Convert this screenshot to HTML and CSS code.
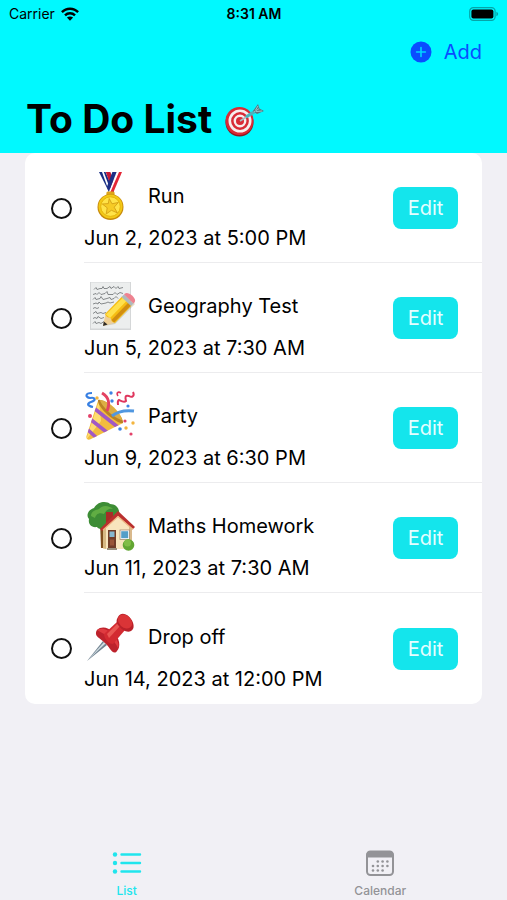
FILE: index.html
```html
<!DOCTYPE html>
<html lang="en">

<head>
    <meta charset="UTF-8">
    <meta name="viewport" content="width=device-width, initial-scale=1.0">
    <title>To Do List</title>
    <link rel="stylesheet" href="styles.css">
</head>

<body>
    <header class="header">
        <div class="status-bar">
            <div class="carrier">
                <span>Carrier</span>
                <svg width="18" height="14" viewBox="0 0 18 14" aria-hidden="true">
                    <g fill="none" stroke="#000" stroke-width="2.4">
                        <path d="M0.9 5.2C5.4 .5 12.6 .5 17.1 5.2" />
                        <path d="M4 8.4c2.8-2.8 7.2-2.8 10 0" />
                    </g>
                    <path d="M5.9 10.6c1.8-1.6 4.4-1.6 6.2 0L9 13.8z" />
                </svg>
            </div>
            <span class="time">8:31 AM</span>
            <div class="battery">
                <svg width="30" height="14" viewBox="0 0 30 14" aria-hidden="true">
                    <rect x="0.7" y="0.7" width="25.4" height="12.6" rx="3.6" fill="none" stroke="#05a5a9" stroke-width="1.2" />
                    <rect x="2.4" y="2.4" width="22" height="9.2" rx="2" />
                    <path d="M27.4 4.8c2.3.9 2.3 3.5 0 4.4z" fill="#05a5a9" />
                </svg>
            </div>
        </div>

        <div class="toolbar">
            <button class="add-button" type="button">
                <svg width="22" height="22" viewBox="0 0 22 22" aria-hidden="true">
                    <circle cx="11" cy="11" r="10.5" fill="#0a4dff" />
                    <path d="M11 6.6v8.8M6.6 11h8.8" stroke="#00d6ff" stroke-width="1.6" stroke-linecap="round" />
                </svg>
                <span>Add</span>
            </button>
        </div>

        <h1 class="title">
            <span>To Do List</span>
            <svg width="42" height="36" viewBox="0 0 42 36" aria-hidden="true">
                <ellipse cx="15.5" cy="21.5" rx="14" ry="14" fill="#8d1720" />
                <circle cx="15.5" cy="20" r="14" fill="#d92a35" />
                <circle cx="16" cy="20" r="10.2" fill="none" stroke="#f6eeee" stroke-width="2.6" />
                <circle cx="16" cy="20" r="5.2" fill="none" stroke="#f6eeee" stroke-width="2.4" />
                <path d="M16 20 31 10.500" stroke="#a9bcc4" stroke-width="1.6" />
                <path d="M22 16 34 8.500" stroke="#4bb3bd" stroke-width="3.2" />
                <path d="m29 10 5-7 1.500 4.600L40 10l-7 3z" fill="#5a7781" />
                <path d="m30 11 5-3.400M32 10.600l6-.6M31.600 9l2.400-4" stroke="#a8d7dc" stroke-width="0.8" />
            </svg>
        </h1>
    </header>

    <main class="content">
        <ul class="task-list">
            <li class="task">
                <input class="task-check" type="checkbox" id="task-1">
                <div class="task-body">
                    <label class="task-info" for="task-1">
                        <span class="task-name">
                            <svg class="task-icon" viewBox="0 0 52 52" aria-hidden="true">
                                <path d="M15 2h6.5L30 22h-5z" fill="#162d83" />
                                <path d="M18 2h1.8l7.4 20h-2z" fill="#fff" />
                                <path d="M21.8 2h4.6l4.4 12-3 5z" fill="#c71935" />
                                <path d="M38 2h-4.6L25 22h4.5z" fill="#e32636" />
                                <path d="M35 2h-2.4L24.6 22h1.8z" fill="#fff" />
                                <path d="M32.6 2h-4.2l-5.6 15 2 5z" fill="#1d2f86" />
                                <rect x="22.4" y="21.5" width="8.2" height="5" rx="1.5" fill="#dda51c" />
                                <circle cx="26.5" cy="37" r="13" fill="#c78a0c" />
                                <circle cx="26.5" cy="36.6" r="12" fill="#f3c916" />
                                <circle cx="26.5" cy="36.6" r="9.8" fill="#ffe348" stroke="#e6b40c" />
                                <path d="m25.2 28.5 2.8 5.3 6.4-1.4-4.2 4.8 3.2 5.7-6-2.6-5.2 3.7 1-6.2-4.9-3.8 6-.4z" fill="#f6cb25" stroke="#cf9a12" stroke-width="0.8" stroke-linejoin="round" />
                            </svg>
                            <span>Run</span>
                        </span>
                        <span class="task-date">Jun 2, 2023 at 5:00 PM</span>
                    </label>
                    <button class="edit-button" type="button">Edit</button>
                </div>
            </li>

            <li class="task">
                <input class="task-check" type="checkbox" id="task-2">
                <div class="task-body">
                    <label class="task-info" for="task-2">
                        <span class="task-name">
                            <svg class="task-icon" viewBox="0 0 52 52" aria-hidden="true">
                                <rect x="6" y="2" width="41" height="48" fill="#d5d7d8" />
                                <rect x="7" y="2.5" width="39" height="46" fill="#eceeee" />
                                <g fill="none" stroke="#6b6e71" stroke-width="0.8">
                                    <path d="M10 9.500l2-2 1 2 3-1h2l1-2 1 2h3l3-2 1 2 3-2 2 2 2-2 1 2 4-1" />
                                    <path d="M9 14.500l3-1 1 1 2-2 2 2 4-1 2-2 1 3h5l2-2 2 2 3-2 3 1" />
                                    <path d="M9 19.500l2-2 1 2 4-1 1-2 2 3 4-1 3-1 1 2 3-1 2-2 2 2" />
                                    <path d="M9 24l3-1 2 1 1-2 2 2 5-1 2-1 2 1 4-1" />
                                    <path d="M9 28.500l2-1 2 1 2-1" />
                                    <path d="M9 33.500l3-2 1 2 4-1 2 1 3-1" />
                                    <path d="M9 38.500l2-1 2 1 1-2 3 2 3-1" />
                                    <path d="M9 43.500l2-2 1 2 3-1 2 1 3-2" />
                                </g>
                                <path d="m20 46 3-12 19-18 9 8-20 20z" fill="#8c6f20" opacity=".25" />
                                <path d="m19 46 2.500-12.500 9.500 9z" fill="#efcf96" />
                                <path d="m19 46 .8-4.600 3.800 3.200z" fill="#302c28" />
                                <path d="m21 34 17-17.500 9.500 9L31 43l-3-1.500-1.500-3.500-3.500-1z" fill="#f6bd13" />
                                <path d="m22 34.500 17-17 3.500 3.500-16.500 17z" fill="#ffe04b" />
                                <path d="m30 42.500 17-17-2.800-2.800L27.500 40z" fill="#d18d11" />
                                <path d="m37.500 17 2.500-2.500 9.500 9-2.500 2.500z" fill="#aeb9bd" />
                                <path d="m40 14.500 1-1c3-2.500 12.500 4.500 9.500 9l-1 1z" fill="#ee8290" />
                            </svg>
                            <span>Geography Test</span>
                        </span>
                        <span class="task-date">Jun 5, 2023 at 7:30 AM</span>
                    </label>
                    <button class="edit-button" type="button">Edit</button>
                </div>
            </li>

            <li class="task">
                <input class="task-check" type="checkbox" id="task-3">
                <div class="task-body">
                    <label class="task-info" for="task-3">
                        <span class="task-name">
                            <svg class="task-icon" viewBox="0 0 52 52" aria-hidden="true">
                                <defs>
                                    <clipPath id="cone">
                                        <path d="M14 11 2.500 46c-.7 3 1.500 4.500 4 3.300L39 33C39 25 25 8 14 11z" />
                                    </clipPath>
                                </defs>
                                <g clip-path="url(#cone)">
                                    <path d="M0 8h42v44H0z" fill="#f2bd3d" />
                                    <path d="M15 11 2 50l15-19z" fill="#ffdc70" />
                                    <path d="m11 19 24 19M6 29l19 15M3 39l13 12" fill="none" stroke="#a159c5" stroke-width="3.600" />
                                </g>
                                <path d="M14 10c5-3 26 16 25 23-5 2-26-15-25-23z" fill="#ba8224" />
                                <path d="M16 10c6-1 22 14 22 20-7-1-21-14-22-20z" fill="#dcad43" />
                                <path d="M23 21c3-7 2-14-5-18" fill="none" stroke="#e44262" stroke-width="3" />
                                <path d="M28 26c6-5 13-6 22-5" fill="none" stroke="#5097e0" stroke-width="3" />
                                <path d="M8 3c-7 0-7 4-2 5 5-1 7 2 1 4-5 2-3 4 2 5" fill="none" stroke="#377fe2" stroke-width="2.200" />
                                <path d="M49 2c2 4-1 6-4 4-4-1-4 1-3 5-2 2-5 0-7-1-2 1-1 3-1 5" fill="none" stroke="#df365d" stroke-width="2" />
                                <path d="M37 3c-3-2-5 0-3 3" fill="none" stroke="#df365d" stroke-width="1.600" />
                                <g fill="#3d82e5">
                                    <circle cx="27" cy="3" r="1.700" />
                                    <circle cx="28" cy="11" r="1.700" />
                                    <circle cx="44" cy="16" r="1.600" />
                                    <circle cx="36" cy="39" r="1.800" />
                                </g>
                                <g fill="#e4426a">
                                    <circle cx="6" cy="26" r="2" />
                                    <circle cx="41" cy="31" r="1.600" />
                                    <circle cx="47" cy="44" r="1.600" />
                                </g>
                                <g fill="#f3b53f">
                                    <circle cx="13" cy="8" r="1.700" />
                                    <circle cx="42" cy="38" r="1.700" />
                                    <circle cx="49" cy="33" r="1.700" />
                                </g>
                            </svg>
                            <span>Party</span>
                        </span>
                        <span class="task-date">Jun 9, 2023 at 6:30 PM</span>
                    </label>
                    <button class="edit-button" type="button">Edit</button>
                </div>
            </li>

            <li class="task">
                <input class="task-check" type="checkbox" id="task-4">
                <div class="task-body">
                    <label class="task-info" for="task-4">
                        <span class="task-name">
                            <svg class="task-icon" viewBox="0 0 52 52" aria-hidden="true">
                                <path d="M16 20h5v28h-4z" fill="#80501f" />
                                <path d="M5 19C1 14 6 9 10 8 14 1 23 1 26 4c7 0 10 6 9 10 2 7-5 12-10 12-4 4-10 4-12 1-6 1-9-3-8-8z" fill="#3d8d35" />
                                <path d="M7 16c0-5 5-6 8-7 4-5 11-3 14 0-5-1-7 2-9 5-6-2-8 1-9 4z" fill="#60ad43" />
                                <path d="m19 28 16-14 13 12v23H19z" fill="#f8e5bd" />
                                <path d="M19 28h3v21l-3-1z" fill="#d7b984" />
                                <path d="M45 26h3v22l-3 1z" fill="#d9b98d" />
                                <path d="M22 12h7v8l-7 6z" fill="#a92c27" />
                                <path d="m16 29 18-18 17 16-2 2-15-13-16 15z" fill="#ba302e" />
                                <path d="m19 30 15-13.500 15 13" fill="none" stroke="#eeb07d" stroke-width="1.200" />
                                <rect x="24" y="30" width="8" height="18" fill="#713d28" />
                                <rect x="25.500" y="31.500" width="5" height="5.500" fill="#86b8cf" />
                                <rect x="26" y="39.500" width="4" height="6" fill="#985538" />
                                <rect x="36" y="30" width="9.500" height="9.500" fill="#fff" stroke="#a58a72" stroke-width="0.800" />
                                <rect x="37.200" y="31.200" width="7" height="7" fill="#549ec9" />
                                <path d="M23 48h10v2H23z" fill="#998f7c" />
                                <circle cx="44.500" cy="45" r="5.800" fill="#62a633" />
                                <circle cx="43.500" cy="43" r="3.500" fill="#81bd46" />
                            </svg>
                            <span>Maths Homework</span>
                        </span>
                        <span class="task-date">Jun 11, 2023 at 7:30 AM</span>
                    </label>
                    <button class="edit-button" type="button">Edit</button>
                </div>
            </li>

            <li class="task">
                <input class="task-check" type="checkbox" id="task-5">
                <div class="task-body">
                    <label class="task-info" for="task-5">
                        <span class="task-name">
                            <svg class="task-icon" viewBox="0 0 52 52" aria-hidden="true">
                                <path d="m3 50 16-20 4 4z" fill="#718391" />
                                <path d="m4 49 16-18 1.500 1.500z" fill="#d0dce1" />
                                <path d="M13 19c4-4 11-3 16 2 7 6 8 15 4 19-2 3-5 1-7-2-3-5-6-7-11-11-3-2-4-5-2-8z" fill="#bd222c" />
                                <path d="M13 19c5-3 12 0 16 5 4 4 7 10 5 13-3-8-12-13-21-18z" fill="#e03b40" />
                                <path d="m20 23 13-12 8 8-12 14c-4 0-9-5-9-10z" fill="#d32a31" />
                                <path d="m23 23 11-11 2.500 2.500L25 27z" fill="#e95753" />
                                <path d="M34 6c3-6 10-3 13 2 3 4 4 10 0 12-4 2-9-1-12-5-3-3-3-6-1-9z" fill="#b9212a" />
                                <ellipse cx="41" cy="10.500" rx="8" ry="6" transform="rotate(42 41 10.500)" fill="#da3437" />
                            </svg>
                            <span>Drop off</span>
                        </span>
                        <span class="task-date">Jun 14, 2023 at 12:00 PM</span>
                    </label>
                    <button class="edit-button" type="button">Edit</button>
                </div>
            </li>
        </ul>
    </main>

    <nav class="tab-bar">
        <a class="tab active" href="#list">
            <svg width="30" height="28" viewBox="0 0 30 28" aria-hidden="true">
                <g fill="#20e5ed">
                    <circle cx="3" cy="5.500" r="2.200" />
                    <circle cx="3" cy="14" r="2.200" />
                    <circle cx="3" cy="22.500" r="2.200" />
                </g>
                <path d="M9.500 5.500H28M9.500 14H28M9.500 22.500H28" stroke="#20e5ed" stroke-width="2.400" stroke-linecap="round" />
            </svg>
            <span>List</span>
        </a>
        <a class="tab" href="#calendar">
            <svg width="30" height="28" viewBox="0 0 30 28" aria-hidden="true">
                <rect x="2" y="2.500" width="26" height="23.500" rx="3.500" fill="none" stroke="#939397" stroke-width="2" />
                <path d="M1.500 8.500V5.500c0-2 1.500-3.500 3.500-3.500h20c2 0 3.500 1.500 3.500 3.500v3z" fill="#939397" />
                <g fill="#939397">
                    <circle cx="12.800" cy="12.500" r="1.300" />
                    <circle cx="17.600" cy="12.500" r="1.300" />
                    <circle cx="22.400" cy="12.500" r="1.300" />
                    <circle cx="8" cy="17" r="1.300" />
                    <circle cx="12.800" cy="17" r="1.300" />
                    <circle cx="17.600" cy="17" r="1.300" />
                    <circle cx="22.400" cy="17" r="1.300" />
                    <circle cx="8" cy="21.500" r="1.300" />
                    <circle cx="12.800" cy="21.500" r="1.300" />
                    <circle cx="17.600" cy="21.500" r="1.300" />
                </g>
            </svg>
            <span>Calendar</span>
        </a>
    </nav>
</body>

</html>
```

FILE: styles.css
```css
* {
    margin: 0;
    padding: 0;
    box-sizing: border-box;
}

body {
    font-family: 'Inter', 'Liberation Sans', sans-serif;
    display: flex;
    flex-direction: column;
    min-height: 100vh;
    background-color: #f1f0f5;
    color: #000;
}

button {
    font-family: inherit;
    border: none;
    cursor: pointer;
}

svg {
    display: block;
    flex-shrink: 0;
}

/* header */
.header {
    background-color: #00f9ff;
    padding-bottom: 8px;
}

.status-bar {
    display: grid;
    grid-template-columns: 1fr auto 1fr;
    align-items: center;
    height: 27px;
    padding: 0 8px 0 9px;
    font-size: 14px;
}

.carrier {
    display: flex;
    align-items: center;
    gap: 6px;
}

.time {
    font-weight: 600;
}

.battery {
    display: flex;
    justify-content: flex-end;
}

.toolbar {
    display: flex;
    justify-content: flex-end;
    padding: 8px 25px 0;
}

.add-button {
    display: flex;
    align-items: center;
    gap: 12px;
    height: 34px;
    background: none;
    color: #0a4dff;
    font-size: 20px;
}

.title {
    display: flex;
    align-items: center;
    gap: 12px;
    padding: 24px 26px 0;
    font-size: 39px;
    font-weight: 700;
    line-height: 52px;
}

/* tasks */
.content {
    flex: 1;
    padding: 0 25px;
}

.task-list {
    list-style: none;
    background-color: #fff;
    border-radius: 10px;
}

.task {
    display: flex;
    align-items: center;
    gap: 12px;
    padding-left: 26px;
}

.task-check {
    appearance: none;
    width: 21px;
    height: 21px;
    border: 2px solid #111;
    border-radius: 50%;
    cursor: pointer;
}

.task-check:checked {
    background-color: #14e5ec;
}

.task-body {
    flex: 1;
    display: flex;
    align-items: center;
    justify-content: space-between;
    height: 110px;
    padding-right: 24px;
    border-bottom: 1px solid #ececee;
}

.task:last-child .task-body {
    height: 111px;
    border-bottom: none;
}

.task-info {
    display: flex;
    flex-direction: column;
    gap: 3px;
    padding-top: 5px;
    font-size: 20px;
    line-height: 26px;
}

.task-name {
    display: flex;
    align-items: center;
    gap: 12px;
}

.task-icon {
    width: 52px;
    height: 52px;
}

.edit-button {
    width: 65px;
    height: 42px;
    border-radius: 8px;
    background-color: #14e5ec;
    color: #e6fdff;
    font-size: 20px;
}

/* bottom tabs */
.tab-bar {
    display: flex;
    padding-bottom: 1px;
}

.tab {
    flex: 1;
    display: flex;
    flex-direction: column;
    align-items: center;
    gap: 6px;
    color: #939397;
    font-size: 12px;
    font-weight: 500;
    line-height: 16px;
    text-decoration: none;
}

.tab.active {
    color: #20e5ed;
}
```
